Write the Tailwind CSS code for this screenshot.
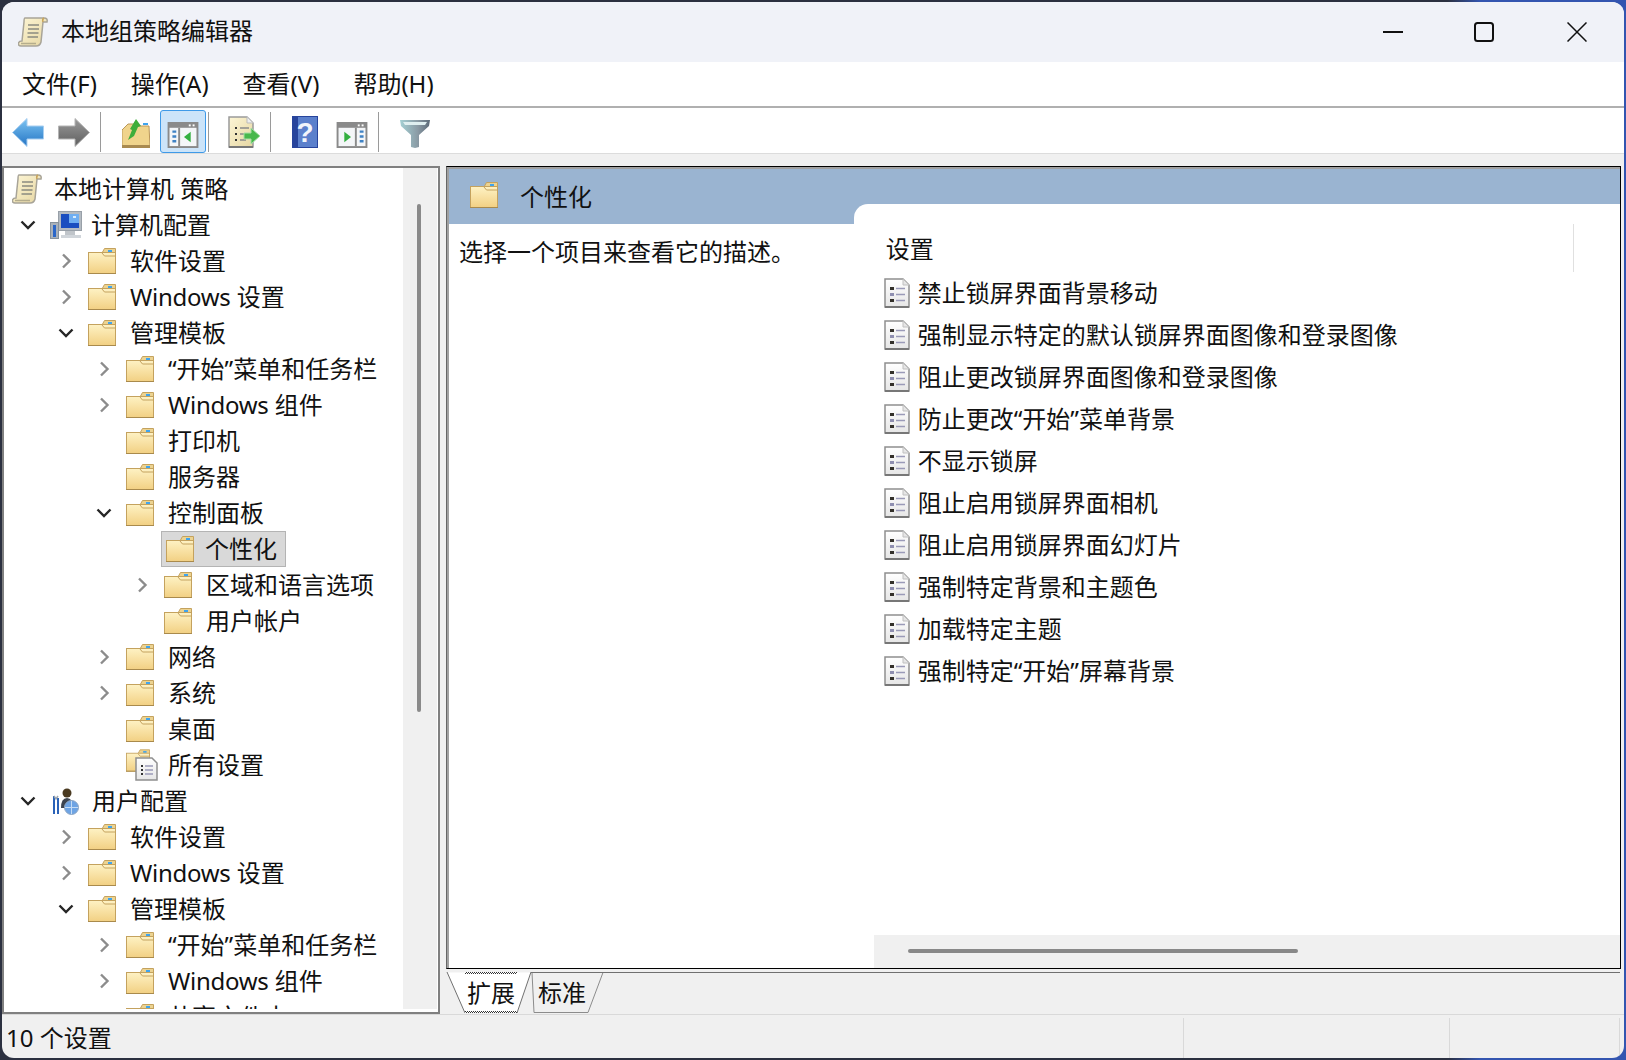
<!DOCTYPE html>
<html lang="zh-CN">

<head>
  <meta charset="UTF-8" />
  <title>本地组策略编辑器</title>
  <script src="https://cdn.jsdelivr.net/npm/@tailwindcss/browser@4"></script>
</head>

<body class="w-[1626px] h-[1060px] overflow-hidden p-[2px] bg-[linear-gradient(90deg,#2b3040_0%,#2b3040_89%,#3355b0_91%,#3355b0_100%)] text-[24px] text-[#111] [font-family:'Noto_Sans','Noto_Sans_CJK_SC',sans-serif]">

  <!-- shared icons -->
  <svg class="absolute w-0 h-0">
    <defs>
      <linearGradient id="foldFill" x1="0" y1="0" x2="0" y2="1">
        <stop offset="0" stop-color="#fef2c4" />
        <stop offset="1" stop-color="#f2d083" />
      </linearGradient>
      <linearGradient id="paper" x1="0" y1="0" x2="1" y2="1">
        <stop offset="0" stop-color="#fdf6d6" />
        <stop offset="1" stop-color="#e6d6a2" />
      </linearGradient>
      <linearGradient id="pageFill" x1="0" y1="0" x2="0" y2="1">
        <stop offset="0" stop-color="#ffffff" />
        <stop offset="1" stop-color="#e6e6e6" />
      </linearGradient>
      <linearGradient id="blueArrow" x1="0" y1="0" x2="0" y2="1">
        <stop offset="0" stop-color="#7cc4f2" />
        <stop offset="1" stop-color="#2474c4" />
      </linearGradient>
      <linearGradient id="grayArrow" x1="0" y1="0" x2="0" y2="1">
        <stop offset="0" stop-color="#9a9a9a" />
        <stop offset="1" stop-color="#5e5e5e" />
      </linearGradient>
      <linearGradient id="funnel" x1="0" y1="0" x2="1" y2="0">
        <stop offset="0" stop-color="#a4d0d4" />
        <stop offset="0.6" stop-color="#8a9aa4" />
        <stop offset="1" stop-color="#5c6a78" />
      </linearGradient>

      <symbol id="folder" viewBox="0 0 28 26">
        <path d="M14 5 L16.500 .5 H27.500 V8 H14z" fill="#ecd391" stroke="#c4a25e" />
        <rect x="20" y="2" width="4" height="2" fill="#3fa4ee" />
        <rect x=".5" y="4.500" width="27" height="21" fill="url(#foldFill)" stroke="#c4a25e" />
        <path d="M14 5 L16.500 8 H27" fill="none" stroke="#c4a25e" />
        <path d="M0 25.500 H28" stroke="#a98a4c" />
      </symbol>

      <symbol id="scroll" viewBox="0 0 30 30">
        <path d="M7 1 H26 Q30 1 29 5 H25 L23 25 Q22 29 18 29 H3 Q0 29 .5 26 Q1 24 4 24 L6 5 Q6 1 7 1z" fill="url(#paper)" stroke="#a8a498" stroke-width="1.500" />
        <path d="M26 1 Q24 2 25 5" fill="none" stroke="#c9a55c" stroke-width="1.500" />
        <path d="M10 8 H21 M10 12 H21 M9.500 16 H20.500 M9.500 20 H20" stroke="#8a8a80" stroke-width="1.500" />
        <path d="M3 26.500 H18" stroke="#b5ad8c" stroke-width="1.500" />
      </symbol>

      <symbol id="computer" viewBox="0 0 32 28">
        <rect x="8.500" y=".5" width="23" height="19" fill="#b4bbc2" stroke="#98a0a8" />
        <rect x="11" y="3" width="18" height="14" fill="#1a4ec0" />
        <rect x="19" y="3" width="10" height="9" fill="#6eaef2" />
        <rect x="23" y="5" width="3" height="2" fill="#d8ecfc" />
        <rect x="15" y="20" width="10" height="4" fill="#c0c5ca" />
        <rect x="11" y="24" width="20" height="3" fill="#d0d5da" />
        <rect x=".5" y="11.500" width="8" height="16" fill="#a9b1ba" stroke="#87929c" />
        <rect x="3" y="14" width="3" height="12" fill="#2a66c8" />
      </symbol>

      <symbol id="user" viewBox="0 0 27 27">
        <circle cx="14" cy="5" r="4.500" fill="#4a3a20" />
        <path d="M8 20 Q8 10 14 10 Q20 10 20 20z" fill="#3c4450" />
        <path d="M1 8 V26 M5 10 V26" stroke="#2a62b8" stroke-width="2" />
        <path d="M1 8 L3 11 L5 8" fill="none" stroke="#9aa4ae" stroke-width="1.500" />
        <circle cx="18.500" cy="19.500" r="7" fill="#6ea4e4" stroke="#8fa7c4" />
        <path d="M12 19.500 H25 M18.500 13 V26" stroke="#c5dcf5" />
      </symbol>

      <symbol id="page" viewBox="0 0 26 30">
        <path d="M1 1 H19 L25 7 V29 H1z" fill="url(#pageFill)" stroke="#8f8f8f" stroke-width="1.500" />
        <path d="M19 1 V7 H25" fill="#e6e6e6" stroke="#c0c0c0" />
        <path d="M1 29 H25" stroke="#777" stroke-width="2" />
        <rect x="6" y="9" width="4" height="3" fill="#33302a" />
        <rect x="6" y="15" width="4" height="3" fill="#8f8fb0" />
        <rect x="6" y="21" width="4" height="3" fill="#33302a" />
        <path d="M12 10.500 H21 M12 16.500 H21 M12 22.500 H21" stroke="#9a9ab8" stroke-width="1.500" />
      </symbol>

      <symbol id="chevRight" viewBox="0 0 16 16">
        <path d="M5 1.500 L11.500 8 L5 14.500" fill="none" stroke="#8c8c8c" stroke-width="2.400" />
      </symbol>
      <symbol id="chevDown" viewBox="0 0 16 16">
        <path d="M1.500 4.500 L8 11 L14.500 4.500" fill="none" stroke="#262626" stroke-width="2.400" />
      </symbol>
    </defs>
  </svg>

  <div class="w-[1622px] h-[1056px] rounded-[12px] overflow-hidden bg-[#f0f0f0] flex flex-col">

    <!-- title bar -->
    <div class="h-[60px] bg-[#f0f2f8] flex items-center">
      <svg class="w-[30px] h-[30px] ml-[16px] mr-[13px]"><use href="#scroll" /></svg>
      <span class="leading-[60px] -mt-[2px]">本地组策略编辑器</span>
      <div class="ml-auto mr-[37px] flex items-center">
        <svg class="w-[20px] h-[20px] mr-[71px]" viewBox="0 0 20 20"><path d="M0 10 H20" stroke="#111" stroke-width="2" /></svg>
        <svg class="w-[20px] h-[20px] mr-[73px]" viewBox="0 0 20 20"><rect x="1" y="1" width="18" height="18" rx="2.500" fill="none" stroke="#111" stroke-width="2" /></svg>
        <svg class="w-[20px] h-[20px]" viewBox="0 0 20 20"><path d="M.5 .5 L19.500 19.500 M19.500 .5 L.5 19.500" stroke="#111" stroke-width="1.500" /></svg>
      </div>
    </div>

    <!-- menu -->
    <div class="h-[46px] bg-white border-b-2 border-[#b0b0b0] flex items-center pl-[20px] gap-[34px] pb-[1px]">
      <span>文件(F)</span>
      <span>操作(A)</span>
      <span>查看(V)</span>
      <span>帮助(H)</span>
    </div>

    <!-- toolbar -->
    <div class="h-[46px] bg-white border-b border-[#dcdcdc] flex items-start">
      <svg class="w-[32px] h-[29px] ml-[10px] mt-[10px]" viewBox="0 0 32 29">
        <path d="M.5 14.500 L15 .5 V8 H31.500 V21 H15 V28.500z" fill="url(#blueArrow)" stroke="#a8cef0" />
      </svg>
      <svg class="w-[32px] h-[29px] ml-[14px] mt-[10px]" viewBox="0 0 32 29">
        <path d="M31.500 14.500 L17 .5 V8 H.5 V21 H17 V28.500z" fill="url(#grayArrow)" stroke="#b4b4b4" />
      </svg>
      <div class="w-px h-[40px] bg-[#9a9a9a] ml-[10px] mt-[4px]"></div>

      <svg class="w-[28px] h-[30px] ml-[21px] mt-[10px]" viewBox="0 0 28 30">
        <path d="M0 12 L6 6 H14 L16 8 H27 L28 29 H0z" fill="#f0d48c" stroke="#b9975a" />
        <rect x="0" y="27" width="28" height="3" fill="#a98a50" />
        <path d="M6 22 L10 12 L8 11 L14 1 L19 8 L16 9 L12 18z" fill="#3fae3a" />
        <rect x="21" y="5" width="5" height="2" fill="#3fa4ee" />
      </svg>

      <div class="w-[46px] h-[43px] ml-[10px] mt-[2px] bg-[#cce4f9] border border-[#3f9ae8] rounded-[3px] flex items-start justify-center pt-[11px]">
        <svg class="w-[32px] h-[26px]" viewBox="0 0 32 27">
          <rect x="1" y="1" width="30" height="25" fill="#f4f6f8" stroke="#8a8a8a" stroke-width="2" />
          <rect x="1" y="1" width="30" height="5" fill="#8a8a8a" />
          <rect x="22" y="2.500" width="2" height="2" fill="#fff" /><rect x="26" y="2.500" width="2" height="2" fill="#fff" />
          <rect x="11" y="6" width="2" height="19" fill="#8a8a8a" />
          <path d="M5 10 H9 M5 15 H9 M5 20 H9" stroke="#3f82c4" stroke-width="2.500" />
          <path d="M24 10 V21 L17 15.500z" fill="#34b040" />
        </svg>
      </div>
      <div class="w-px h-[40px] bg-[#9a9a9a] ml-[2px] mt-[4px]"></div>

      <svg class="w-[32px] h-[32px] ml-[19px] mt-[8px]" viewBox="0 0 32 32">
        <path d="M1 1 H19 L25 7 V31 H1z" fill="url(#paper)" stroke="#9a9a9a" stroke-width="1.500" />
        <path d="M19 1 V7 H25" fill="#eee" stroke="#bbb" />
        <path d="M1 31 H25" stroke="#777" stroke-width="2" />
        <path d="M7 12 H9 M7 18 H9 M7 24 H9" stroke="#333" stroke-width="2" />
        <path d="M12 12 H21 M12 18 H18 M12 24 H18" stroke="#8a8a8a" stroke-width="1.500" />
        <path d="M16 17 H23 V12 L32 20 L23 28 V23 H16z" fill="#48b84c" stroke="#a5dfa5" />
      </svg>
      <div class="w-px h-[40px] bg-[#9a9a9a] ml-[10px] mt-[4px]"></div>

      <svg class="w-[26px] h-[32px] ml-[21px] mt-[8px]" viewBox="0 0 26 32">
        <rect width="26" height="32" fill="#27449c" />
        <rect x="6" y="1" width="19" height="30" fill="#5b80cc" />
        <text x="13" y="26" text-anchor="middle" font-size="28" font-weight="700" font-family="Liberation Sans" fill="#f2f5fb">?</text>
      </svg>
      <svg class="w-[32px] h-[26px] ml-[18px] mt-[14px]" viewBox="0 0 32 27">
        <rect x="1" y="1" width="30" height="25" fill="#f4f6f8" stroke="#8a8a8a" stroke-width="2" />
        <rect x="1" y="1" width="30" height="5" fill="#8a8a8a" />
        <rect x="22" y="2.500" width="2" height="2" fill="#fff" /><rect x="26" y="2.500" width="2" height="2" fill="#fff" />
        <rect x="19" y="6" width="2" height="19" fill="#8a8a8a" />
        <path d="M24 10 H28 M24 15 H28 M24 20 H28" stroke="#3f82c4" stroke-width="2.500" />
        <path d="M8 10 V21 L15 15.500z" fill="#34b040" />
      </svg>
      <div class="w-px h-[40px] bg-[#9a9a9a] ml-[10px] mt-[4px]"></div>

      <svg class="w-[30px] h-[28px] ml-[21px] mt-[12px]" viewBox="0 0 30 28">
        <path d="M0 0 H30 L29 6 L19 15 V27 L15 28 L11 27 V15 L1 6z" fill="url(#funnel)" />
        <path d="M3 2 H27 L25 5 H5z" fill="#dfeff0" />
      </svg>
    </div>

    <div class="h-[12px] shrink-0"></div>

    <!-- panes -->
    <div class="flex h-[848px]">

      <!-- tree -->
      <div class="w-[438px] h-[848px] border-2 border-[#808080] bg-white flex">
        <div class="flex-1 h-[841px] overflow-hidden pt-[3px]">
          <div class="h-9 flex items-center pl-[8px]"><svg class="w-[30px] h-[30px] mr-[12px]"><use href="#scroll" /></svg>本地计算机 策略</div>

          <div class="h-9 flex items-center pl-[16px]"><svg class="w-4 h-4 mr-[14px]"><use href="#chevDown" /></svg><svg class="w-[32px] h-[28px] mr-[9px]"><use href="#computer" /></svg>计算机配置</div>
          <div class="h-9 flex items-center pl-[54px]"><svg class="w-4 h-4 mr-[14px]"><use href="#chevRight" /></svg><svg class="w-[28px] h-[26px] mr-[14px]"><use href="#folder" /></svg>软件设置</div>
          <div class="h-9 flex items-center pl-[54px]"><svg class="w-4 h-4 mr-[14px]"><use href="#chevRight" /></svg><svg class="w-[28px] h-[26px] mr-[14px]"><use href="#folder" /></svg><span><span class="tracking-[-0.3px]">Windows</span> 设置</span></div>
          <div class="h-9 flex items-center pl-[54px]"><svg class="w-4 h-4 mr-[14px]"><use href="#chevDown" /></svg><svg class="w-[28px] h-[26px] mr-[14px]"><use href="#folder" /></svg>管理模板</div>
          <div class="h-9 flex items-center pl-[92px]"><svg class="w-4 h-4 mr-[14px]"><use href="#chevRight" /></svg><svg class="w-[28px] h-[26px] mr-[14px]"><use href="#folder" /></svg>“开始”菜单和任务栏</div>
          <div class="h-9 flex items-center pl-[92px]"><svg class="w-4 h-4 mr-[14px]"><use href="#chevRight" /></svg><svg class="w-[28px] h-[26px] mr-[14px]"><use href="#folder" /></svg><span><span class="tracking-[-0.3px]">Windows</span> 组件</span></div>
          <div class="h-9 flex items-center pl-[122px]"><svg class="w-[28px] h-[26px] mr-[14px]"><use href="#folder" /></svg>打印机</div>
          <div class="h-9 flex items-center pl-[122px]"><svg class="w-[28px] h-[26px] mr-[14px]"><use href="#folder" /></svg>服务器</div>
          <div class="h-9 flex items-center pl-[92px]"><svg class="w-4 h-4 mr-[14px]"><use href="#chevDown" /></svg><svg class="w-[28px] h-[26px] mr-[14px]"><use href="#folder" /></svg>控制面板</div>
          <div class="h-9 flex items-center pl-[157px]">
            <div class="h-[36px] w-[125px] flex items-center pl-[4px] bg-[#d9d9d9] border border-[#b4b4b4]"><svg class="w-[28px] h-[26px] mr-[11px]"><use href="#folder" /></svg>个性化</div>
          </div>
          <div class="h-9 flex items-center pl-[130px]"><svg class="w-4 h-4 mr-[14px]"><use href="#chevRight" /></svg><svg class="w-[28px] h-[26px] mr-[14px]"><use href="#folder" /></svg>区域和语言选项</div>
          <div class="h-9 flex items-center pl-[160px]"><svg class="w-[28px] h-[26px] mr-[14px]"><use href="#folder" /></svg>用户帐户</div>
          <div class="h-9 flex items-center pl-[92px]"><svg class="w-4 h-4 mr-[14px]"><use href="#chevRight" /></svg><svg class="w-[28px] h-[26px] mr-[14px]"><use href="#folder" /></svg>网络</div>
          <div class="h-9 flex items-center pl-[92px]"><svg class="w-4 h-4 mr-[14px]"><use href="#chevRight" /></svg><svg class="w-[28px] h-[26px] mr-[14px]"><use href="#folder" /></svg>系统</div>
          <div class="h-9 flex items-center pl-[122px]"><svg class="w-[28px] h-[26px] mr-[14px]"><use href="#folder" /></svg>桌面</div>
          <div class="h-9 flex items-center pl-[122px]">
            <svg class="w-[32px] h-[32px] mr-[10px]" viewBox="0 0 32 32">
              <use href="#folder" width="24" height="23" />
              <path d="M10 9 H26 L31 14 V31 H10z" fill="url(#pageFill)" stroke="#8f8f8f" stroke-width="1.500" />
              <path d="M15 17 H17 M15 21 H17 M15 25 H17" stroke="#333" stroke-width="2" />
              <path d="M19 17 H27 M19 21 H27 M19 25 H27" stroke="#9a9ab8" stroke-width="1.500" />
            </svg>所有设置
          </div>

          <div class="h-9 flex items-center pl-[16px]"><svg class="w-4 h-4 mr-[14px]"><use href="#chevDown" /></svg><svg class="w-[27px] h-[27px] mr-[12px] ml-[3px]"><use href="#user" /></svg>用户配置</div>
          <div class="h-9 flex items-center pl-[54px]"><svg class="w-4 h-4 mr-[14px]"><use href="#chevRight" /></svg><svg class="w-[28px] h-[26px] mr-[14px]"><use href="#folder" /></svg>软件设置</div>
          <div class="h-9 flex items-center pl-[54px]"><svg class="w-4 h-4 mr-[14px]"><use href="#chevRight" /></svg><svg class="w-[28px] h-[26px] mr-[14px]"><use href="#folder" /></svg><span><span class="tracking-[-0.3px]">Windows</span> 设置</span></div>
          <div class="h-9 flex items-center pl-[54px]"><svg class="w-4 h-4 mr-[14px]"><use href="#chevDown" /></svg><svg class="w-[28px] h-[26px] mr-[14px]"><use href="#folder" /></svg>管理模板</div>
          <div class="h-9 flex items-center pl-[92px]"><svg class="w-4 h-4 mr-[14px]"><use href="#chevRight" /></svg><svg class="w-[28px] h-[26px] mr-[14px]"><use href="#folder" /></svg>“开始”菜单和任务栏</div>
          <div class="h-9 flex items-center pl-[92px]"><svg class="w-4 h-4 mr-[14px]"><use href="#chevRight" /></svg><svg class="w-[28px] h-[26px] mr-[14px]"><use href="#folder" /></svg><span><span class="tracking-[-0.3px]">Windows</span> 组件</span></div>
          <div class="h-9 flex items-center pl-[92px]"><svg class="w-4 h-4 mr-[14px]"><use href="#chevRight" /></svg><svg class="w-[28px] h-[26px] mr-[14px]"><use href="#folder" /></svg>共享文件夹</div>
        </div>
        <!-- tree scrollbar -->
        <div class="w-[34px] h-[841px] mr-px bg-[#f0f0f0] pt-[36px]">
          <div class="w-[4px] h-[508px] ml-[14px] rounded-full bg-[#8a8a8a]"></div>
        </div>
      </div>

      <div class="w-[6px]"></div>

      <!-- right side -->
      <div class="w-[1175px] flex flex-col">
        <div class="h-[803px] border border-black border-l-[#666666] flex flex-col">
          <div class="border-t-2 border-l-2 border-[#a0a0a0] flex-1 flex flex-col bg-white">

            <div class="relative h-[55px] bg-[#9ab4d1] flex items-center pl-[21px] shrink-0">
              <svg class="w-[28px] h-[26px] mr-[22px] -mt-[3px]"><use href="#folder" /></svg>
              <span>个性化</span>
              <div class="absolute right-0 bottom-0 w-[766px] h-[20px] bg-white rounded-tl-[14px]"></div>
            </div>

            <div class="flex flex-1">
              <div class="w-[405px] pl-[10px] pt-[10px] leading-[36px]">选择一个项目来查看它的描述。</div>

              <div class="w-[767px] flex flex-col">
                <div class="h-[48px] flex items-center pl-[32px] pt-[2px] relative shrink-0">
                  设置
                  <div class="absolute right-[46px] top-0 h-[48px] w-px bg-[#e0e0e0]"></div>
                </div>
                <div class="flex-1">
                  <div class="h-[42px] flex items-center pl-[30px]"><svg class="w-[26px] h-[30px] mr-[8px]"><use href="#page" /></svg>禁止锁屏界面背景移动</div>
                  <div class="h-[42px] flex items-center pl-[30px]"><svg class="w-[26px] h-[30px] mr-[8px]"><use href="#page" /></svg>强制显示特定的默认锁屏界面图像和登录图像</div>
                  <div class="h-[42px] flex items-center pl-[30px]"><svg class="w-[26px] h-[30px] mr-[8px]"><use href="#page" /></svg>阻止更改锁屏界面图像和登录图像</div>
                  <div class="h-[42px] flex items-center pl-[30px]"><svg class="w-[26px] h-[30px] mr-[8px]"><use href="#page" /></svg>防止更改“开始”菜单背景</div>
                  <div class="h-[42px] flex items-center pl-[30px]"><svg class="w-[26px] h-[30px] mr-[8px]"><use href="#page" /></svg>不显示锁屏</div>
                  <div class="h-[42px] flex items-center pl-[30px]"><svg class="w-[26px] h-[30px] mr-[8px]"><use href="#page" /></svg>阻止启用锁屏界面相机</div>
                  <div class="h-[42px] flex items-center pl-[30px]"><svg class="w-[26px] h-[30px] mr-[8px]"><use href="#page" /></svg>阻止启用锁屏界面幻灯片</div>
                  <div class="h-[42px] flex items-center pl-[30px]"><svg class="w-[26px] h-[30px] mr-[8px]"><use href="#page" /></svg>强制特定背景和主题色</div>
                  <div class="h-[42px] flex items-center pl-[30px]"><svg class="w-[26px] h-[30px] mr-[8px]"><use href="#page" /></svg>加载特定主题</div>
                  <div class="h-[42px] flex items-center pl-[30px]"><svg class="w-[26px] h-[30px] mr-[8px]"><use href="#page" /></svg>强制特定“开始”屏幕背景</div>
                </div>
                <!-- horizontal scrollbar -->
                <div class="h-[33px] ml-[20px] bg-[#f0f0f0] pt-[14px] shrink-0">
                  <div class="w-[390px] h-[4px] ml-[34px] rounded-full bg-[#888888]"></div>
                </div>
              </div>
            </div>
          </div>
        </div>

        <!-- tabs -->
        <div class="relative h-[45px]">
          <svg class="absolute left-0 top-0 w-[200px] h-[45px]" viewBox="0 0 200 45">
            <path d="M86 3.500 H157 L142 43.500 H88z" fill="#f0f0f0" stroke="#8c8c8c" />
            <path d="M1 3.500 L19 44 H71 L85 3.500z" fill="#fff" />
            <path d="M1 3 L19 44 M71 44 L85 3" fill="none" stroke="#707070" />
          </svg>
          <div class="absolute left-0 right-[1px] top-[3px] h-px bg-[#707070] ml-[85px]"></div>
          <div class="relative flex items-start pt-[3px] pl-[19px]">
            <div class="w-[52px] h-[41px] p-[2px] bg-[repeating-conic-gradient(#333333_0_25%,#ffffff_0_50%)] bg-[size:2px_2px]">
              <div class="h-full bg-white flex items-center justify-center -mx-[2px] bg-transparent">扩展</div>
            </div>
            <div class="h-[41px] ml-[21px] flex items-center">标准</div>
          </div>
        </div>
      </div>
    </div>

    <!-- status bar -->
    <div class="h-[44px] border-t border-[#d9d9d9] pt-[3px] flex">
      <div class="w-[1182px] border-r border-[#d9d9d9] pl-[4px] leading-[40px]">10 个设置</div>
      <div class="w-[266px] border-r border-[#d9d9d9]"></div>
      <div class="w-[170px] border-r border-[#d9d9d9]"></div>
    </div>
  </div>
</body>

</html>
